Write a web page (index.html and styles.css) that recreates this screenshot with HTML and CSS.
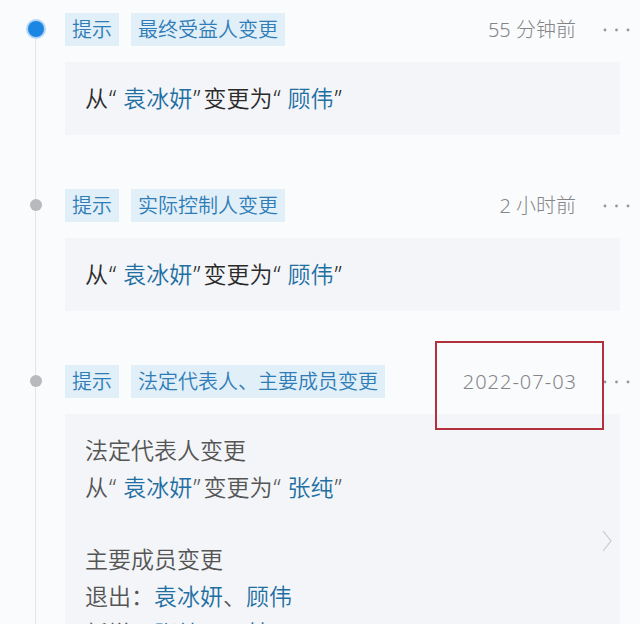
FILE: index.html
```html
<!DOCTYPE html>
<html lang="zh-CN">
<head>
  <meta charset="UTF-8">
  <meta name="viewport" content="width=device-width, initial-scale=1">
  <title>动态</title>
  <link rel="stylesheet" href="styles.css">
</head>
<body>
  <div class="feed">

    <div class="item">
      <div class="rail"><span class="dot dot-active"></span></div>
      <div class="content">
        <div class="head">
          <span class="tag">提示</span>
          <span class="tag">最终受益人变更</span>
          <span class="time">55 分钟前</span>
          <span class="more"><svg width="27" height="6" viewBox="0 0 27 6"><circle cx="2" cy="3" r="1.4"/><circle cx="13.5" cy="3" r="1.4"/><circle cx="25" cy="3" r="1.4"/></svg></span>
        </div>
        <div class="card">
          <p class="dark">从<span class="ql">“</span><em>袁冰妍</em><span class="qr">”</span>变更为<span class="ql">“</span><em>顾伟</em><span class="qr">”</span></p>
        </div>
      </div>
    </div>

    <div class="item">
      <div class="rail"><span class="dot"></span></div>
      <div class="content">
        <div class="head">
          <span class="tag">提示</span>
          <span class="tag">实际控制人变更</span>
          <span class="time">2 小时前</span>
          <span class="more"><svg width="27" height="6" viewBox="0 0 27 6"><circle cx="2" cy="3" r="1.4"/><circle cx="13.5" cy="3" r="1.4"/><circle cx="25" cy="3" r="1.4"/></svg></span>
        </div>
        <div class="card">
          <p class="dark">从<span class="ql">“</span><em>袁冰妍</em><span class="qr">”</span>变更为<span class="ql">“</span><em>顾伟</em><span class="qr">”</span></p>
        </div>
      </div>
    </div>

    <div class="item">
      <div class="rail"><span class="dot"></span></div>
      <div class="content">
        <div class="head">
          <span class="tag">提示</span>
          <span class="tag">法定代表人、主要成员变更</span>
          <span class="time date marked">2022-07-03</span>
          <span class="more"><svg width="27" height="6" viewBox="0 0 27 6"><circle cx="2" cy="3" r="1.4"/><circle cx="13.5" cy="3" r="1.4"/><circle cx="25" cy="3" r="1.4"/></svg></span>
        </div>
        <div class="card card-link">
          <div class="card-body">
            <p>法定代表人变更</p>
            <p>从<span class="ql">“</span><em>袁冰妍</em><span class="qr">”</span>变更为<span class="ql">“</span><em>张纯</em><span class="qr">”</span></p>
            <p class="section">主要成员变更</p>
            <p>退出：<em>袁冰妍</em>、<em>顾伟</em></p>
            <p>新增：<em>张纯</em>、<em>王某</em></p>
          </div>
          <svg class="chevron" width="10" height="22" viewBox="0 0 10 22"><polyline points="1,1 9,11 1,21"/></svg>
        </div>
      </div>
    </div>

  </div>
</body>
</html>
```

FILE: styles.css
```css
body {
  margin: 0;
  background: #fff;
  font-family: "Noto Sans", "Noto Sans CJK SC", sans-serif;
}
.feed {
  height: 611px;
  overflow: hidden;
  padding-top: 13px;
  background: #fafbfc;
}
.item {
  display: grid;
  grid-template-columns: 65px 555px;
  padding-bottom: 54px;
}
.rail {
  display: flex;
  flex-direction: column;
  align-items: center;
  padding-left: 6px;
  margin-bottom: -54px;
  background: linear-gradient(#e2e5e9, #e2e5e9) 35px 0 / 1px 100% no-repeat;
}
.item:first-child .rail {
  background-position: 35px 18px;
}
.dot {
  width: 12px;
  height: 12px;
  margin-top: 10px;
  border-radius: 50%;
  background: #b8b9bd;
}
.dot-active {
  width: 16px;
  height: 16px;
  margin-top: 8px;
  background: #1c86e3;
  box-shadow: 0 0 0 2px #b3d6f6;
}
.head {
  display: flex;
  align-items: center;
  gap: 12px;
  height: 33px;
  margin-right: -10px;
}
.tag {
  padding: 0 7px;
  line-height: 33px;
  font-size: 20px;
  font-weight: 350;
  color: #2f7cb6;
  background: #e1eff9;
}
.time {
  margin-left: auto;
  font-size: 20px;
  font-weight: 300;
  line-height: 33px;
  color: #858589;
  position: relative;
}
.date {
  letter-spacing: 1px;
  margin-right: -1px;
}
.marked::after {
  content: "";
  position: absolute;
  right: -27px;
  top: -24px;
  width: 165px;
  height: 85px;
  border: 2px solid #b3313c;
}
.more {
  display: flex;
  margin-left: 15px;
}
.more svg {
  fill: #98989c;
}
.card {
  margin-top: 16px;
  padding: 18px 20px;
  background: #f3f5f8;
}
.card p {
  margin: 0;
  font-size: 23px;
  font-weight: 350;
  line-height: 37px;
  color: #555;
}
.card p.dark {
  color: #2a2a2a;
}
.card em {
  font-style: normal;
  color: #1f6fa3;
}
.card .ql {
  margin-left: 1px;
  letter-spacing: 7px;
}
.card .qr {
  margin-left: 1px;
  letter-spacing: 3px;
}
.card .section {
  margin-top: 35px;
}
.card-link {
  display: flex;
  padding-right: 8px;
}
.card-body {
  flex: 1;
}
.chevron {
  margin-top: 98px;
  fill: none;
  stroke: #c9cacd;
  stroke-width: 1.2;
}
```
